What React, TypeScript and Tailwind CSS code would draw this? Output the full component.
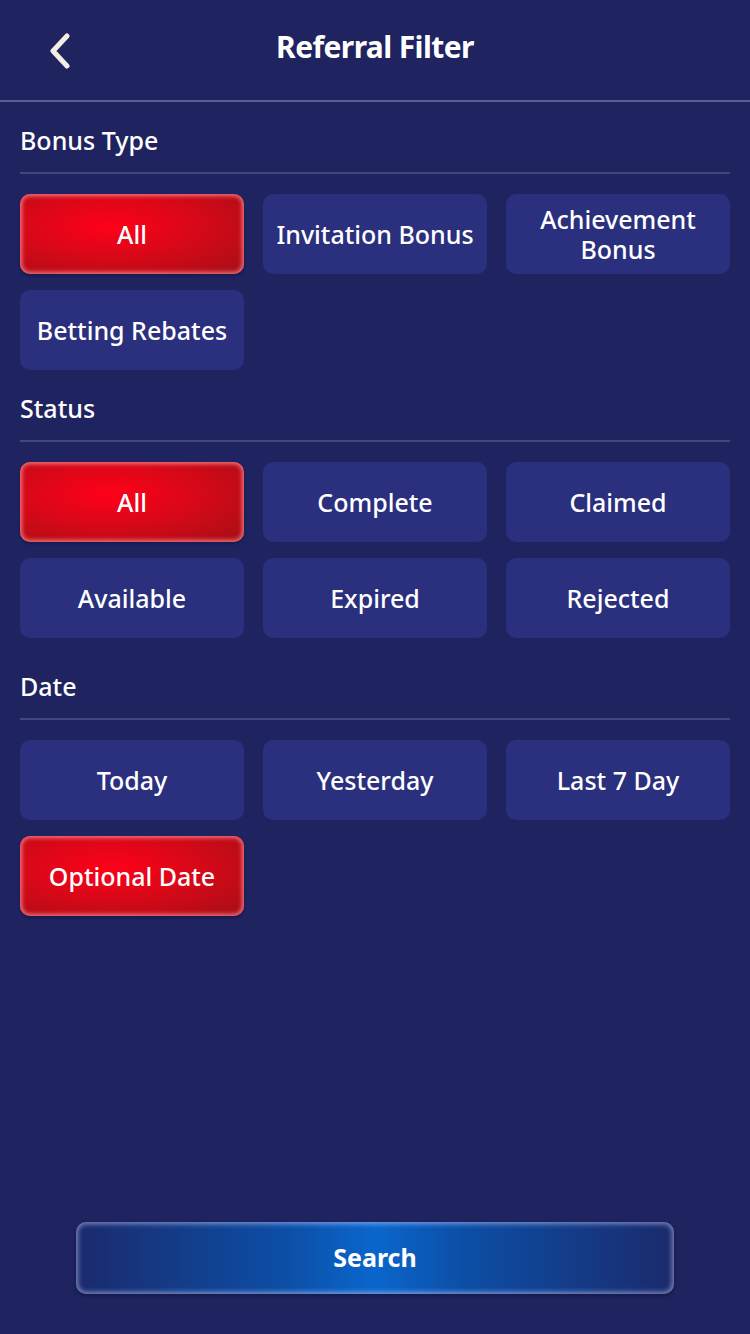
import { useState } from "react"

const bonusTypes = ["All", "Invitation Bonus", "Achievement Bonus", "Betting Rebates"]
const statuses = ["All", "Complete", "Claimed", "Available", "Expired", "Rejected"]
const dates = ["Today", "Yesterday", "Last 7 Day", "Optional Date"]

function Chip({ label, active, onClick }: { label: string; active: boolean; onClick: () => void }) {
  return (
    <button
      onClick={onClick}
      className={
        active
          ? "h-20 rounded-[10px] px-2 text-[25px] leading-[30px] font-medium text-white bg-[radial-gradient(ellipse_at_40%_40%,#ff0019_0%,#d80818_45%,#a50f16_100%)] shadow-[inset_0_0_4px_2px_rgba(255,150,160,0.75),0_2px_3px_rgba(0,0,0,0.25)]"
          : "h-20 rounded-[10px] px-2 text-[25px] leading-[30px] font-medium text-white bg-[#2a2f7e]"
      }
    >
      {label}
    </button>
  )
}

function Section({
  title,
  items,
  selected,
  onSelect,
  topPad,
}: {
  title: string
  items: string[]
  selected: string
  onSelect: (v: string) => void
  topPad: string
}) {
  return (
    <div className="px-5">
      <div className={`${topPad} pb-4 border-b-2 border-[#41477f] text-[25px] leading-8 font-medium text-white`}>
        {title}
      </div>
      <div className="mt-5 grid grid-cols-3 gap-x-[19px] gap-y-4">
        {items.map((it) => (
          <Chip key={it} label={it} active={selected === it} onClick={() => onSelect(it)} />
        ))}
      </div>
    </div>
  )
}

export default function App() {
  const [bonus, setBonus] = useState("All")
  const [status, setStatus] = useState("All")
  const [date, setDate] = useState("Optional Date")

  return (
    <div className="min-h-screen flex flex-col bg-[#1f2360] font-['Noto_Sans','Open_Sans',sans-serif]">
      {/* header */}
      <div className="relative h-[102px] border-b-2 border-[#5a6096] flex items-center justify-center">
        <button className="absolute left-[48px] top-[33px] w-6 h-9 flex items-center justify-center">
          <svg width="24" height="36" viewBox="0 0 24 36" fill="none">
            <path d="M19 3 L5 18 L19 33" stroke="#f3efe6" strokeWidth="5" strokeLinecap="round" strokeLinejoin="round" />
          </svg>
        </button>
        <h1 className="text-[30px] font-bold text-white tracking-[-0.6px] -mt-2">
          Referral Filter
        </h1>
      </div>

      <Section title="Bonus Type" items={bonusTypes} selected={bonus} onSelect={setBonus} topPad="pt-[22px]" />
      <Section title="Status" items={statuses} selected={status} onSelect={setStatus} topPad="pt-[22px]" />
      <Section title="Date" items={dates} selected={date} onSelect={setDate} topPad="pt-[32px]" />

      <div className="mt-auto pb-10 flex justify-center">
        <button className="w-[598px] h-[72px] rounded-[10px] text-[25px] font-bold text-white bg-[linear-gradient(to_right,#1b2a6c_0%,#0c4ea6_35%,#0a66cc_50%,#0c4ea6_65%,#1b2a6c_100%)] shadow-[inset_0_0_5px_2px_rgba(200,210,255,0.55),0_2px_4px_rgba(0,0,0,0.3)]">
          Search
        </button>
      </div>
    </div>
  )
}
